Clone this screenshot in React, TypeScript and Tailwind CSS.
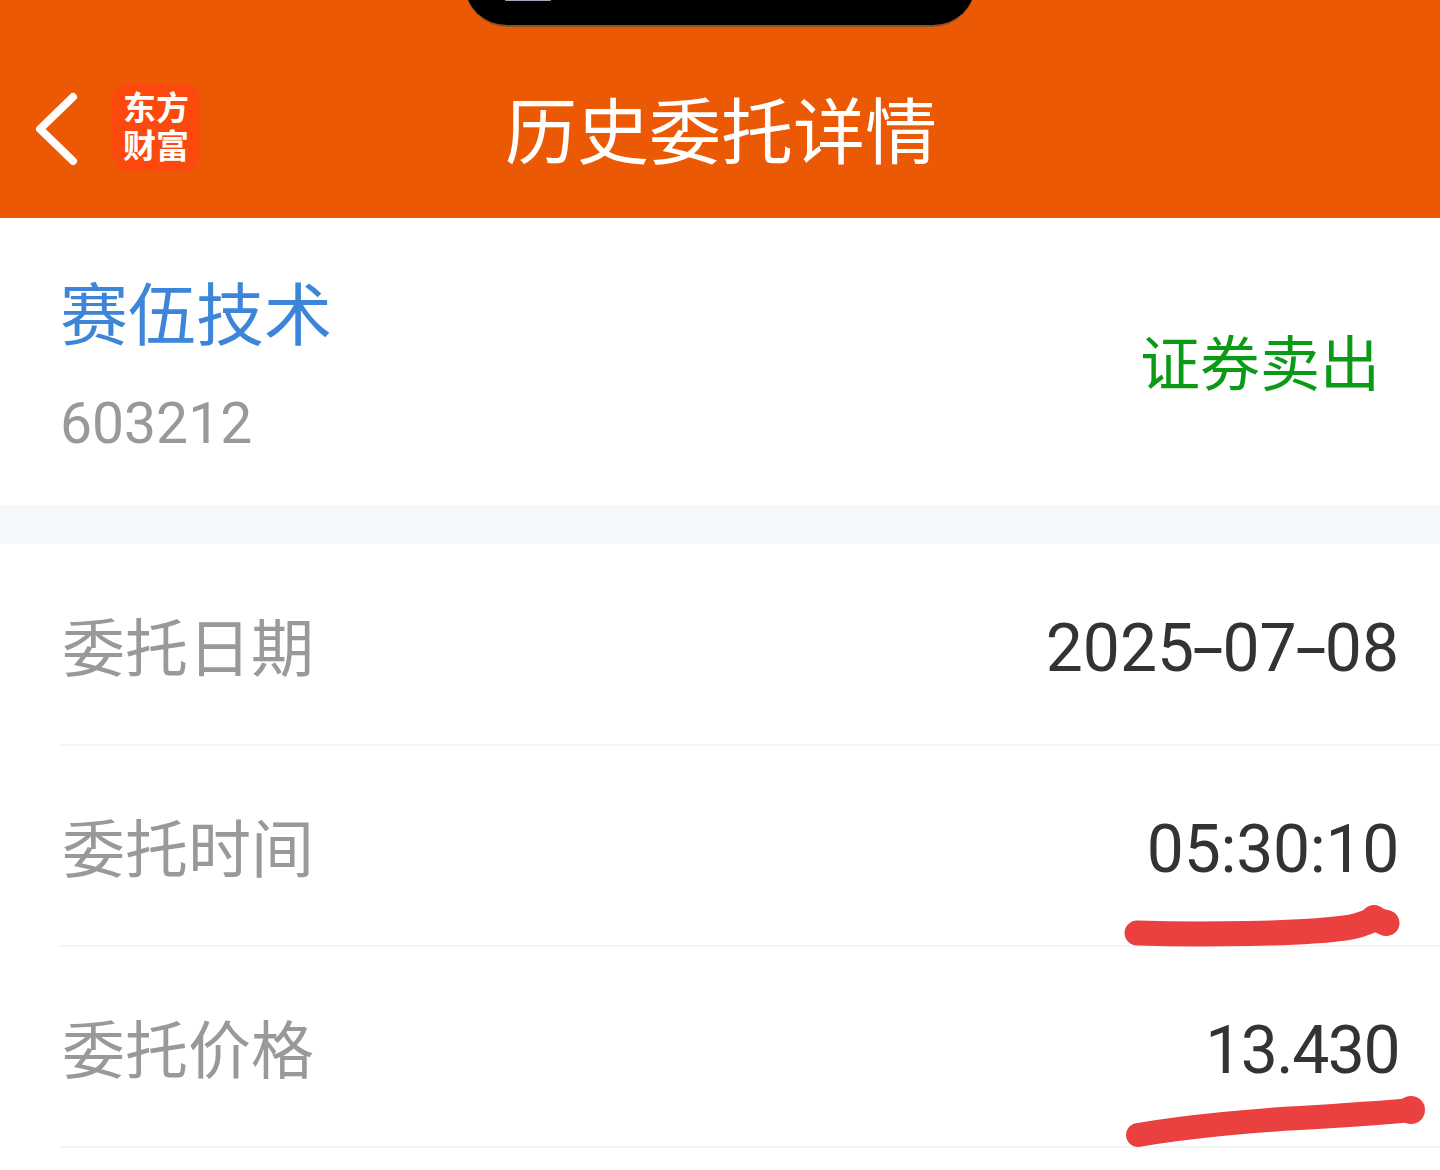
const cjk = "font-['Noto_Sans_CJK_SC','Noto_Sans',sans-serif]";

const Dash = () => <span className="mx-[5px] inline-block scale-x-[1.7]">-</span>;

const rows = [
  {
    label: "委托日期",
    value: (
      <>
        2025<Dash />07<Dash />08
      </>
    ),
    spacing: "",
  },
  { label: "委托时间", value: "05:30:10", spacing: "tracking-[-0.3px]" },
  { label: "委托价格", value: "13.430", spacing: "tracking-[-1.5px]" },
];

const App = () => {
  return (
    <div className="relative h-[1170px] w-[1440px] overflow-hidden bg-white font-['Roboto','Noto_Sans_CJK_SC',sans-serif]">
      {/* camera cutout */}
      <div className="absolute left-[465px] top-[-40px] h-[67px] w-[510px] overflow-hidden rounded-b-[42px] border-b-2 border-[#8a5326] bg-black">
        <div className="absolute left-[40px] top-[39px] h-[2px] w-[46px] rounded-full bg-[#a9a3bb]" />
      </div>

      <header className="flex h-[218px] items-end bg-[#eb5905]">
        <div className="flex h-[178px] w-full items-center pb-[4px] pl-[35px]">
          <svg width="44" height="76" viewBox="0 0 44 76" fill="none" className="mt-[3px] shrink-0">
            <path d="M38 6 L5 38 L38 70" stroke="white" strokeWidth="8" strokeLinecap="round" strokeLinejoin="round" />
          </svg>
          <div className={`ml-[33px] flex h-[88px] w-[88px] shrink-0 flex-col items-center justify-center rounded-[16px] bg-[#fc4a0e] pb-[4px] text-[33px] leading-[38px] font-bold text-white ${cjk}`}>
            <span>东方</span>
            <span>财富</span>
          </div>
          <h1 className={`ml-[305px] text-[72px] leading-none font-normal text-white ${cjk}`}>历史委托详情</h1>
        </div>
      </header>

      <section className="flex h-[287px] items-center justify-between pl-[60px] pr-[60px]">
        <div className="pt-[16px]">
          <div className={`mt-[-12px] text-[68px] leading-[80px] text-[#3d85d8] ${cjk}`}>赛伍技术</div>
          <div className="mt-[40px] text-[57px] leading-[66px] text-[#999999]">603212</div>
        </div>
        <div className={`mb-[4px] text-[60px] leading-none text-[#0a9a16] ${cjk}`}>证券卖出</div>
      </section>

      <div className="h-[39px] bg-[#f5f8fa]" />

      <section className="pt-[1px]">
        {rows.map((row) => (
          <div key={row.label} className="ml-[60px] flex h-[201px] items-center justify-between border-b-2 border-[#f3f4f6] pr-[41px]">
            <span className={`pb-[2px] pl-[2px] text-[63px] leading-none text-[#999999] ${cjk}`}>{row.label}</span>
            <span className={`pt-[9px] text-[66px] leading-none text-[#333333] ${row.spacing}`}>{row.value}</span>
          </div>
        ))}
      </section>

      {/* hand-drawn marker strokes */}
      <svg className="absolute inset-0" width="1440" height="1170" viewBox="0 0 1440 1170" fill="#ea4040">
        <path d="M1137 933 C1200 935 1300 934 1345 928 C1360 926 1368 922 1374 919 L1387 923" fill="none" stroke="#ea4040" strokeWidth="25" strokeLinecap="round" strokeLinejoin="round" />
        <circle cx="1374" cy="918" r="13" />
        <circle cx="1386" cy="923" r="13" />
        <path d="M1138 1135 C1190 1126 1260 1120 1300 1118 C1350 1115 1390 1112 1412 1110" fill="none" stroke="#ea4040" strokeWidth="24" strokeLinecap="round" strokeLinejoin="round" />
        <circle cx="1411" cy="1110" r="14" />
      </svg>
    </div>
  );
};

export default App;
